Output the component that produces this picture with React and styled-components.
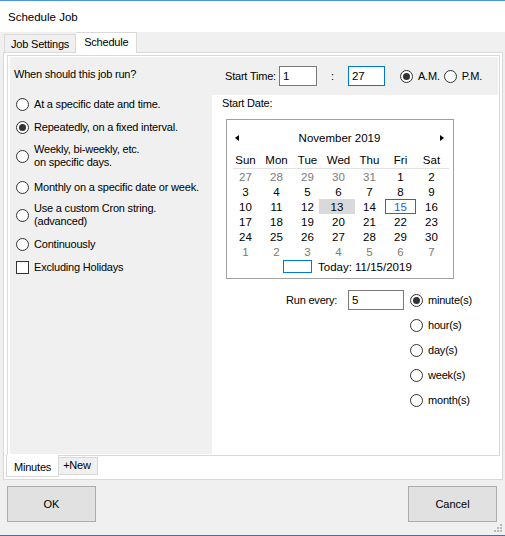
import React from 'react';
import styled, { createGlobalStyle } from 'styled-components';

const GlobalStyle = createGlobalStyle`
  html, body {
    margin: 0;
    padding: 0;
    background: #f0f0f0;
  }
  body {
    font-family: "Liberation Sans", Arial, sans-serif;
  }
`;

const Window = styled.div`
  position: relative;
  width: 505px;
  height: 536px;
  box-sizing: border-box;
  display: flex;
  flex-direction: column;
  background: #f0f0f0;
  border-top: 1px solid #4a95dc;
  border-bottom: 1px solid #1c7cd5;
  color: #000;
  font-size: 11px;
  letter-spacing: -0.2px;
`;

const TitleBar = styled.div`
  height: 31px;
  display: flex;
  align-items: center;
  padding-left: 8px;
  background: #fff;
  font-size: 11.5px;
  letter-spacing: 0;
`;

const OuterTabs = styled.div`
  margin-left: 3px;
  width: 500px;
  display: flex;
  flex-direction: column;
`;

const TabStrip = styled.div`
  height: 20px;
  display: flex;
  align-items: flex-end;
  padding-left: 1px;
  position: relative;
  z-index: 1;
`;

const TopTab = styled.div`
  box-sizing: border-box;
  display: flex;
  align-items: center;
  height: ${p => (p.$active ? '21px' : '18px')};
  margin-bottom: ${p => (p.$active ? '-1px' : '0')};
  padding: ${p => (p.$active ? '0 8px 2px 8px' : '1px 6px 0 6px')};
  background: ${p => (p.$active ? '#fff' : '#f0f0f0')};
  border: 1px solid #d9d9d9;
  border-bottom: none;
  border-left: ${p => (p.$active ? 'none' : '1px solid #d9d9d9')};
`;

const Panel = styled.div`
  box-sizing: border-box;
  height: 428px;
  padding: 2px 2px 2px 3px;
  background: #fff;
  border: 1px solid #d9d9d9;
  display: flex;
  flex-direction: column;
`;

const InnerPage = styled.div`
  box-sizing: border-box;
  height: 401px;
  padding: 1px 1px 1px 2px;
  border: 1px solid #d9d9d9;
  display: flex;
  flex-direction: column;
`;

const TopBar = styled.div`
  height: 38px;
  flex: none;
  display: flex;
  align-items: center;
  background: #f0f0f0;
`;

const Question = styled.div`
  width: 211px;
  padding-left: 4px;
  margin-top: -5px;
`;

const Label = styled.span`
  white-space: nowrap;
`;

const TextBox = styled.div`
  box-sizing: border-box;
  width: ${p => p.$w}px;
  height: 20px;
  margin-left: ${p => p.$ml || 0}px;
  padding-left: 3px;
  display: flex;
  align-items: center;
  background: #fff;
  border: 1px solid ${p => (p.$focus ? '#0078d7' : '#7a7a7a')};
  font-size: 11.5px;
`;

const Colon = styled.span`
  width: 31px;
  text-align: center;
`;

const RadioWrap = styled.label`
  display: flex;
  align-items: center;
  gap: 5px;
  white-space: nowrap;
`;

const Circle = styled.span`
  box-sizing: border-box;
  width: 13px;
  height: 13px;
  flex: none;
  border-radius: 50%;
  border: 1px solid #333;
  background: #fff;
  display: flex;
  align-items: center;
  justify-content: center;
  &::after {
    content: '';
    display: ${p => (p.$checked ? 'block' : 'none')};
    width: 7px;
    height: 7px;
    border-radius: 50%;
    background: #333;
  }
`;

const Box = styled.span`
  box-sizing: border-box;
  width: 13px;
  height: 13px;
  flex: none;
  border: 1px solid #333;
  background: #fff;
`;

const Radio = ({ checked, children, className }) => (
  <RadioWrap className={className}>
    <Circle $checked={checked} />
    <span>{children}</span>
  </RadioWrap>
);

const TimeRadio = styled(Radio)`
  margin-left: ${p => p.$ml}px;
`;

const Body = styled.div`
  flex: 1;
  display: flex;
`;

const LeftCol = styled.div`
  width: 202px;
  background: #f0f0f0;
  padding-left: 6px;
  box-sizing: border-box;
  display: flex;
  flex-direction: column;
`;

const Option = styled.div`
  display: flex;
  align-items: center;
  gap: 5px;
  margin-top: ${p => p.$mt}px;
  line-height: ${p => (p.$two ? '13px' : '14px')};
`;

const RightCol = styled.div`
  flex: 1;
  background: #fff;
  padding: 1px 0 0 10px;
  display: flex;
  flex-direction: column;
  align-items: flex-start;
`;

const StartDate = styled.div`
  line-height: 14px;
`;

const Calendar = styled.div`
  box-sizing: border-box;
  width: 228px;
  height: 160px;
  margin: 9px 0 0 4px;
  padding: 10px 0 0 3px;
  border: 1px solid #a0a0a0;
  font-size: 11.5px;
  letter-spacing: 0;
`;

const CalHeader = styled.div`
  height: 16px;
  display: flex;
  align-items: center;
  padding: 0 9px 0 5px;
`;

const Arrow = styled.span`
  width: 0;
  height: 0;
  border-top: 3.5px solid transparent;
  border-bottom: 3.5px solid transparent;
  ${p => (p.$dir === 'left' ? 'border-right: 4px solid #000;' : 'border-left: 4px solid #000;')}
`;

const MonthTitle = styled.div`
  flex: 1;
  text-align: center;
`;

const DayGrid = styled.div`
  display: grid;
  grid-template-columns: repeat(7, 31px);
  grid-auto-rows: 15px;
  align-items: center;
  text-align: center;
`;

const WeekHead = styled(DayGrid)`
  margin-top: 6px;
  grid-auto-rows: 16px;
`;

const Divider = styled.div`
  height: 1px;
  margin: 0 4px 0 3px;
  background: #e3e3e3;
`;

const Day = styled.div`
  box-sizing: border-box;
  height: 15px;
  line-height: 14px;
  color: ${p => (p.$other ? '#7a7a7a' : p.$today ? '#1a5fcc' : '#000')};
  background: ${p => (p.$selected ? '#d9d9d9' : 'transparent')};
  border: 1px solid ${p => (p.$today ? '#0078d7' : 'transparent')};
  margin: ${p => (p.$selected ? '0 -1px 0 -4px' : '0')};
`;

const TodayRow = styled.div`
  height: 15px;
  display: flex;
  align-items: center;
  gap: 6px;
  padding-left: 53px;
`;

const TodayBox = styled.span`
  box-sizing: border-box;
  width: 29px;
  height: 13px;
  border: 1px solid #0078d7;
`;

const RunEvery = styled.div`
  display: flex;
  align-items: flex-start;
  margin: 11px 0 0 64px;
`;

const RunLabel = styled.div`
  width: 62px;
  line-height: 20px;
`;

const Units = styled.div`
  margin-left: 6px;
  display: flex;
  flex-direction: column;
  gap: 5px;
`;

const UnitRadio = styled(Radio)`
  height: 20px;
`;

const BottomTabs = styled.div`
  display: flex;
  align-items: flex-start;
  margin: -1px 0 0 -1px;
`;

const BottomTab = styled.div`
  box-sizing: border-box;
  display: flex;
  align-items: center;
  height: ${p => (p.$active ? '22px' : '18px')};
  margin-top: ${p => (p.$active ? '0' : '2px')};
  padding: ${p => (p.$active ? '2px 7px 0 7px' : '0 6px 2px 4px')};
  background: ${p => (p.$active ? '#fff' : '#f0f0f0')};
  border: 1px solid #d9d9d9;
  border-top: ${p => (p.$active ? 'none' : '1px solid #d9d9d9')};
  border-left: ${p => (p.$active ? '1px solid #d9d9d9' : 'none')};
`;

const ButtonRow = styled.div`
  display: flex;
  justify-content: space-between;
  margin-top: 6px;
  padding: 0 8px 0 7px;
`;

const Button = styled.button`
  box-sizing: border-box;
  width: 89px;
  height: 36px;
  background: #e1e1e1;
  border: 1px solid #adadad;
  font-family: inherit;
  font-size: 11px;
  color: #000;
  padding: 0;
`;

const Grip = styled.svg`
  position: absolute;
  right: 2px;
  bottom: 2px;
`;

const weeks = [
  [27, 28, 29, 30, 31, 1, 2],
  [3, 4, 5, 6, 7, 8, 9],
  [10, 11, 12, 13, 14, 15, 16],
  [17, 18, 19, 20, 21, 22, 23],
  [24, 25, 26, 27, 28, 29, 30],
  [1, 2, 3, 4, 5, 6, 7],
];

const options = [
  { mt: 2, text: ['At a specific date and time.'] },
  { mt: 9, text: ['Repeatedly, on a fixed interval.'], checked: true },
  { mt: 9, text: ['Weekly, bi-weekly, etc.', 'on specific days.'] },
  { mt: 11, text: ['Monthly on a specific date or week.'] },
  { mt: 8, text: ['Use a custom Cron string.', '(advanced)'] },
  { mt: 9, text: ['Continuously'] },
];

export default function App() {
  return (
    <Window>
      <GlobalStyle />
      <TitleBar>Schedule Job</TitleBar>
      <OuterTabs>
        <TabStrip>
          <TopTab>Job Settings</TopTab>
          <TopTab $active>Schedule</TopTab>
        </TabStrip>
        <Panel>
          <InnerPage>
            <TopBar>
              <Question>When should this job run?</Question>
              <Label>Start Time:</Label>
              <TextBox $w={38} $ml={3}>1</TextBox>
              <Colon>:</Colon>
              <TextBox $w={37} $focus>27</TextBox>
              <TimeRadio checked $ml={15}>A.M.</TimeRadio>
              <TimeRadio $ml={4}>P.M.</TimeRadio>
            </TopBar>
            <Body>
              <LeftCol>
                {options.map((o, i) => (
                  <Option key={i} $mt={o.mt} $two={o.text.length > 1}>
                    <Circle $checked={o.checked} />
                    <div>
                      {o.text.map(t => (
                        <div key={t}>{t}</div>
                      ))}
                    </div>
                  </Option>
                ))}
                <Option $mt={9}>
                  <Box />
                  <span>Excluding Holidays</span>
                </Option>
              </LeftCol>
              <RightCol>
                <StartDate>Start Date:</StartDate>
                <Calendar>
                  <CalHeader>
                    <Arrow $dir="left" />
                    <MonthTitle>November 2019</MonthTitle>
                    <Arrow $dir="right" />
                  </CalHeader>
                  <WeekHead>
                    {['Sun', 'Mon', 'Tue', 'Wed', 'Thu', 'Fri', 'Sat'].map(d => (
                      <div key={d}>{d}</div>
                    ))}
                  </WeekHead>
                  <Divider />
                  <DayGrid>
                    {weeks.map((w, wi) =>
                      w.map((d, di) => (
                        <Day
                          key={wi + '-' + di}
                          $other={(wi === 0 && d > 20) || (wi === 5 && d < 10)}
                          $selected={wi === 2 && d === 13}
                          $today={wi === 2 && d === 15}
                        >
                          {d}
                        </Day>
                      ))
                    )}
                  </DayGrid>
                  <TodayRow>
                    <TodayBox />
                    <span>Today: 11/15/2019</span>
                  </TodayRow>
                </Calendar>
                <RunEvery>
                  <RunLabel>Run every:</RunLabel>
                  <TextBox $w={56}>5</TextBox>
                  <Units>
                    <UnitRadio checked>minute(s)</UnitRadio>
                    <UnitRadio>hour(s)</UnitRadio>
                    <UnitRadio>day(s)</UnitRadio>
                    <UnitRadio>week(s)</UnitRadio>
                    <UnitRadio>month(s)</UnitRadio>
                  </Units>
                </RunEvery>
              </RightCol>
            </Body>
          </InnerPage>
          <BottomTabs>
            <BottomTab $active>Minutes</BottomTab>
            <BottomTab>+New</BottomTab>
          </BottomTabs>
        </Panel>
      </OuterTabs>
      <ButtonRow>
        <Button>OK</Button>
        <Button>Cancel</Button>
      </ButtonRow>
      <Grip width="10" height="10" viewBox="0 0 10 10">
        {[[8, 2], [5, 5], [8, 5], [2, 8], [5, 8], [8, 8]].map(([x, y]) => (
          <rect key={x + '-' + y} x={x - 1} y={y - 1} width="2" height="2" fill="#b8b8b8" />
        ))}
      </Grip>
    </Window>
  );
}
